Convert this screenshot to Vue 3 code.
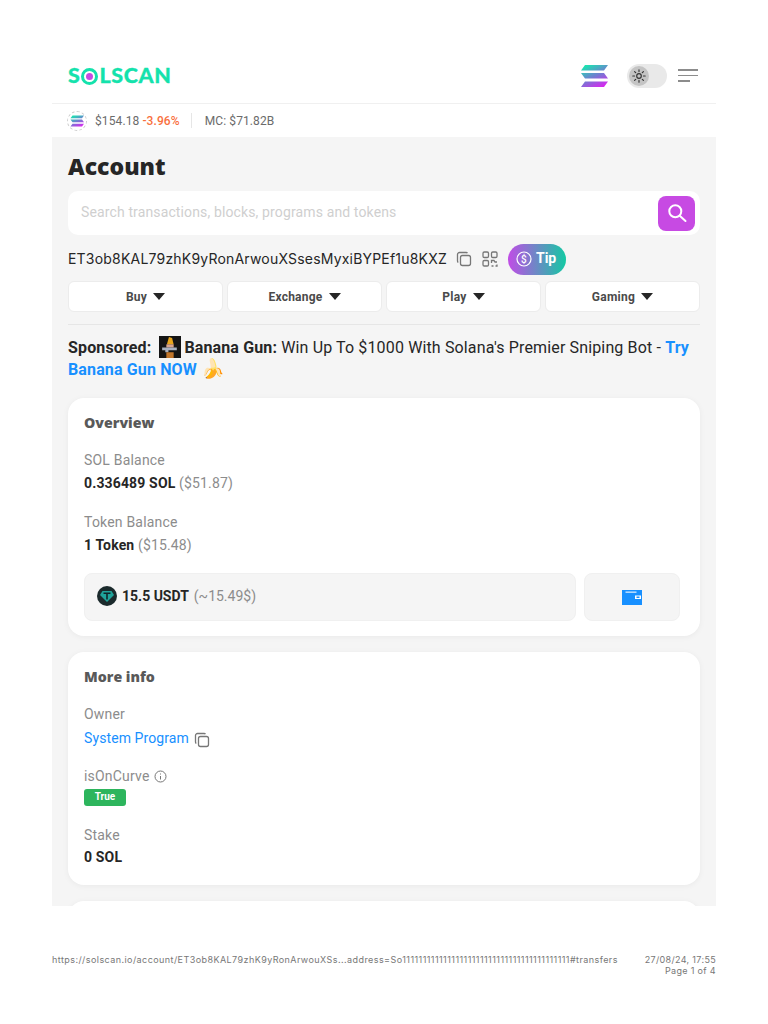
<script setup>
const menus = ['Buy', 'Exchange', 'Play', 'Gaming']
</script>

<template>
  <div class="sheet">
    <div class="page">
      <header class="top">
        <div class="logo"><span>S</span><i class="logo-o"><b></b></i><span>LSCAN</span></div>
        <div class="top-right">
          <svg class="sol" width="28" height="22" viewBox="0 0 28 22">
            <defs><linearGradient id="sg" x1="0.2" y1="0" x2="0.8" y2="1"><stop offset="0" stop-color="#19e6b0"/><stop offset=".5" stop-color="#6f7fd0"/><stop offset="1" stop-color="#d926f0"/></linearGradient></defs>
            <path fill="url(#sg)" d="M5 0h23l-4 5.500H1zM1 8h23l4 5.500H5zM5 16.500h23l-4 5.500H1z"/>
          </svg>
          <div class="toggle">
            <div class="knob">
              <svg width="16" height="16" viewBox="0 0 18 18" fill="none" stroke="#333" stroke-width="1.300" stroke-linecap="round"><circle cx="9" cy="9" r="2.600"/><path d="M9 2v2M9 14v2M2 9h2M14 9h2M4 4l1.300 1.300M12.700 12.700 14 14M4 14l1.300-1.300M12.700 5.300 14 4"/></svg>
            </div>
          </div>
          <div class="burger"><i></i><i></i><i class="short"></i></div>
        </div>
      </header>
      <div class="stats">
        <span class="coin">
          <svg width="14" height="12" viewBox="0 0 28 22"><path fill="url(#sg)" d="M5 0h23l-4 5.500H1zM1 8h23l4 5.500H5zM5 16.500h23l-4 5.500H1z"/></svg>
        </span>
        <span class="price">$154.18 <em>-3.96%</em></span>
        <span class="vline"></span>
        <span class="price">MC: $71.82B</span>
      </div>
      <main class="body">
        <h1>Account</h1>
        <div class="search">
          <span class="ph">Search transactions, blocks, programs and tokens</span>
          <button class="search-btn">
            <svg width="20" height="20" viewBox="0 0 20 20" fill="none" stroke="#fff" stroke-width="2" stroke-linecap="round"><circle cx="8.300" cy="8.300" r="6"/><path d="m13 13 5.500 5"/></svg>
          </button>
        </div>
        <div class="addr">
          <span class="addr-text">ET3ob8KAL79zhK9yRonArwouXSsesMyxiBYPEf1u8KXZ</span>
          <svg class="copy" width="16" height="16" viewBox="0 0 16 16" fill="none" stroke="#777" stroke-width="1.300"><rect x="4.500" y="4.500" width="10" height="10" rx="2"/><path d="M11.500 2.200A1.800 1.800 0 0 0 10 1.500H3.500a2 2 0 0 0-2 2V10c0 .7.300 1.200.8 1.500"/></svg>
          <svg class="qr" width="16" height="16" viewBox="0 0 16 16" fill="none" stroke="#777" stroke-width="1.300"><rect x="1" y="1" width="5.500" height="5.500" rx="1.300"/><rect x="9.500" y="1" width="5.500" height="5.500" rx="1.300"/><rect x="1" y="9.500" width="5.500" height="5.500" rx="1.300"/><path d="M9.500 12V9.500h2.500l1 1.500h2M9.500 15h2M13.500 15H15v-1.500"/></svg>
          <div class="tip">
            <svg width="16" height="16" viewBox="0 0 16 16" fill="none" stroke="#fff" stroke-width="1.200"><circle cx="8" cy="8" r="7"/></svg>
            <span class="dollar">$</span>
            <span class="tip-t">Tip</span>
          </div>
        </div>
        <div class="menus">
          <button v-for="m in menus" :key="m" class="menu">{{ m }}<i class="caret"></i></button>
        </div>
        <div class="sponsor">
          <b>Sponsored:</b>
          <svg class="gun" width="22" height="22" viewBox="0 0 21 21"><rect width="21" height="21" fill="#141414"/><path d="M9.500 1l3 1 1.500 6H7.500z" fill="#e8a51c"/><rect x="7" y="8" width="7" height="3" fill="#d9a48f"/><path d="M3 11h14v2.500H9v2H6v-2H3z" fill="#a7b0bf"/><path d="M7 15.500h7V21H7z" fill="#c0752a"/></svg>
          <b>Banana Gun:</b> Win Up To $1000 With Solana's Premier Sniping Bot - <a>Try</a> <a>Banana Gun NOW</a> <span class="banana">🍌</span>
        </div>
        <section class="card overview">
          <h2>Overview</h2>
          <div class="label">SOL Balance</div>
          <div class="value"><b>0.336489 SOL</b> <span>($51.87)</span></div>
          <div class="label second">Token Balance</div>
          <div class="value"><b>1 Token</b> <span>($15.48)</span></div>
          <div class="tokens">
            <div class="token">
              <svg width="20" height="20" viewBox="0 0 20 20"><circle cx="10" cy="10" r="10" fill="#1b2a2c"/><path d="M5.500 5h9l2.500 4-7 7-7-7z" fill="#1fa39a"/><path d="M6.500 6.500h7v1.500h-2.700v5.500H9.200V8H6.500z" fill="#10262a"/></svg>
              <b>15.5 USDT</b> <span>(~15.49$)</span>
            </div>
            <div class="wallet">
              <svg width="20" height="15" viewBox="0 0 20 15"><path fill="#1890ff" d="M0 0h20v15H0z"/><rect x="3.500" y="1.500" width="11" height="1.300" fill="#d6eaff"/><rect x="13" y="5.500" width="6" height="3.500" fill="#fff"/><rect x="14.500" y="6.500" width="3" height="1.500" fill="#1890ff"/></svg>
            </div>
          </div>
        </section>
        <section class="card info">
          <h2>More info</h2>
          <div class="label">Owner</div>
          <div class="owner"><a>System Program</a>
            <svg width="16" height="16" viewBox="0 0 16 16" fill="none" stroke="#777" stroke-width="1.300"><rect x="4.500" y="4.500" width="10" height="10" rx="2"/><path d="M11.500 2.200A1.800 1.800 0 0 0 10 1.500H3.500a2 2 0 0 0-2 2V10c0 .7.300 1.200.8 1.500"/></svg>
          </div>
          <div class="label curve">isOnCurve
            <svg width="13" height="13" viewBox="0 0 13 13" fill="none" stroke="#777"><circle cx="6.500" cy="6.500" r="5.500"/><path d="M6.500 6v3.500M6.500 3.500v1"/></svg>
          </div>
          <span class="badge">True</span>
          <div class="label stake">Stake</div>
          <div class="value stake-v"><b>0 SOL</b></div>
        </section>
        <section class="card peek"></section>
      </main>
    </div>
    <footer class="foot">
      <span class="url">https://solscan.io/account/ET3ob8KAL79zhK9yRonArwouXSs...address=So11111111111111111111111111111111111111111#transfers</span>
      <span class="date">27/08/24, 17:55<br />Page 1 of 4</span>
    </footer>
  </div>
</template>

<style>
html, body { background: #fff; }
</style>

<style scoped>
.sheet { width: 768px; height: 1024px; overflow: hidden; padding: 52px 52px 0; box-sizing: border-box; font-family: Roboto, "Liberation Sans", sans-serif; color: #262626; }
.page { width: 664px; height: 854px; overflow: hidden; background: #fff; }
.top { display: flex; align-items: center; justify-content: space-between; padding: 0 18px 3px 16px; box-sizing: border-box; height: 52px; border-bottom: 1px solid #f0f0f0; }
.logo { display: flex; align-items: center; font: 900 21.500px/1 Lato, sans-serif; color: #14e2ac; letter-spacing: .6px; -webkit-text-stroke: .3px #14e2ac; }
.logo-o { width: 17px; height: 17px; margin: 0 1px; border: 3px solid #14e2ac; border-radius: 50%; box-sizing: border-box; display: flex; align-items: center; justify-content: center; }
.logo-o b { width: 7px; height: 7px; border-radius: 50%; background: #c74ae3; }
.top-right { display: flex; align-items: center; }
.sol { margin-right: 19px; }
.toggle { width: 40px; height: 24px; border-radius: 12px; background: #e9e9e9; display: flex; align-items: center; padding-left: 2px; box-sizing: border-box; margin-right: 11px; }
.knob { width: 20px; height: 20px; border-radius: 50%; background: #c4c4c4; display: flex; align-items: center; justify-content: center; }
.burger { width: 20px; display: flex; flex-direction: column; gap: 4px; margin-top: -1px; }
.burger i { display: block; height: 1.500px; background: #8c8c8c; }
.burger i.short { width: 12px; }
.stats { height: 33px; display: flex; align-items: center; padding-left: 15px; font-size: 12px; letter-spacing: .1px; color: #6b6b6b; }
.coin { width: 20px; height: 20px; border-radius: 50%; border: 1px dashed #ccc; box-sizing: border-box; display: flex; align-items: center; justify-content: center; margin-right: 8px; }
.price em { font-style: normal; font-weight: 500; color: #f9703e; }
.vline { width: 1px; height: 15px; background: #e6e6e6; margin: 0 13px 0 11px; }
.body { background: #f5f5f5; padding: 14px 16px 0; height: 769px; }
h1 { margin: 0; font: 800 23px/30px "Open Sans", sans-serif; color: #262626; }
.search { height: 44px; margin-top: 10px; background: #fff; border-radius: 10px; display: flex; align-items: center; justify-content: space-between; padding: 0 5px 0 13px; font-size: 14px; letter-spacing: .13px; color: #cfcfcf; }
.ph { margin-bottom: 2px; }
.search-btn { width: 37px; height: 35px; border: 0; border-radius: 8px; background: #c74ae3; display: flex; align-items: center; justify-content: center; padding: 0; }
.addr { height: 32px; margin-top: 8px; display: flex; align-items: center; }
.addr-text { font: 14px Inter, sans-serif; letter-spacing: .2px; color: #262626; margin-bottom: 1px; }
.copy { margin-left: 9px; }
.qr { margin-left: 10px; }
.tip { position: relative; margin-left: 10px; width: 58px; height: 31px; border-radius: 16px; background: linear-gradient(90deg, #c14ce6, #13c9a3); display: flex; align-items: center; padding-left: 8px; box-sizing: border-box; color: #fff; font-weight: 700; font-size: 14px; gap: 4px; }
.tip-t { margin-bottom: 2px; }
.dollar { position: absolute; left: 8px; width: 16px; text-align: center; font-size: 10px; font-weight: 500; }
.menus { margin-top: 6px; display: grid; grid-template-columns: repeat(4, 1fr); gap: 4px; }
.menu { height: 31px; border: 1px solid #ececec; border-radius: 6px; background: #fff; font: 700 12px Roboto, sans-serif; letter-spacing: .25px; color: #4a4a4a; display: flex; align-items: center; justify-content: center; gap: 6px; padding: 0; }
.caret { width: 0; height: 0; border-left: 6px solid transparent; border-right: 6px solid transparent; border-top: 7px solid #262626; }
.sponsor { margin-top: 12px; border-top: 1px solid #e6e6e6; padding-top: 11px; font-size: 16px; line-height: 22px; letter-spacing: .14px; color: #262626; font-weight: 400; }
.sponsor b { font-weight: 700; }
.sponsor a, .owner a { color: #1890ff; }
.sponsor a { font-weight: 700; }
.gun { vertical-align: -5px; margin: 0 3px 0 8px; }
.banana { font-size: 19px; line-height: 18px; font-family: "Noto Color Emoji", sans-serif; }
.card { background: #fff; border-radius: 16px; padding: 16px; box-shadow: 0 1px 6px rgba(0,0,0,.05); margin-bottom: 16px; }
h2 { margin: 0; font: 800 14.200px/18px "Open Sans", sans-serif; color: #595959; }
.label { font-size: 14px; line-height: 20px; letter-spacing: .2px; color: #8c8c8c; }
.value { font-size: 14px; line-height: 20px; letter-spacing: .15px; margin-top: 3px; color: #8c8c8c; }
.value b, .token b { color: #262626; font-weight: 700; }
.overview { margin-top: 17px; height: 238px; box-sizing: border-box; }
.overview .label:first-of-type { margin-top: 18px; }
.second { margin-top: 19px; }
.tokens { margin-top: 18px; display: flex; gap: 8px; padding-right: 4px; }
.token { flex: 1; height: 48px; background: #f5f5f5; border: 1px solid #f0f0f0; border-radius: 8px; box-sizing: border-box; display: flex; align-items: center; padding-left: 12px; font-size: 14px; color: #8c8c8c; gap: 5px; padding-bottom: 3px; }
.wallet { width: 96px; height: 48px; background: #f5f5f5; border: 1px solid #f0f0f0; border-radius: 8px; box-sizing: border-box; display: flex; align-items: center; justify-content: center; padding-top: 1px; }
.info { height: 233px; box-sizing: border-box; }
.info .label:first-of-type { margin-top: 18px; }
.owner { margin-top: 4px; font-size: 14px; line-height: 20px; letter-spacing: .1px; display: flex; align-items: flex-end; gap: 5px; }
.curve { margin-top: 18px; display: flex; align-items: center; gap: 4px; }
.badge { display: block; width: 42px; height: 17px; margin-top: 3px; border-radius: 3px; background: #2db55d; color: #fff; font-size: 10px; font-weight: 700; line-height: 16px; text-align: center; }
.stake { margin-top: 19px; }
.stake-v { margin-top: 2px; }
.peek { height: 60px; }
.foot { display: flex; justify-content: space-between; margin-top: 48px; font: 9px/11px Inter, sans-serif; color: #777; letter-spacing: .43px; }
.url { white-space: nowrap; }
.date { text-align: right; white-space: nowrap; margin-left: 10px; letter-spacing: .33px; }
</style>
